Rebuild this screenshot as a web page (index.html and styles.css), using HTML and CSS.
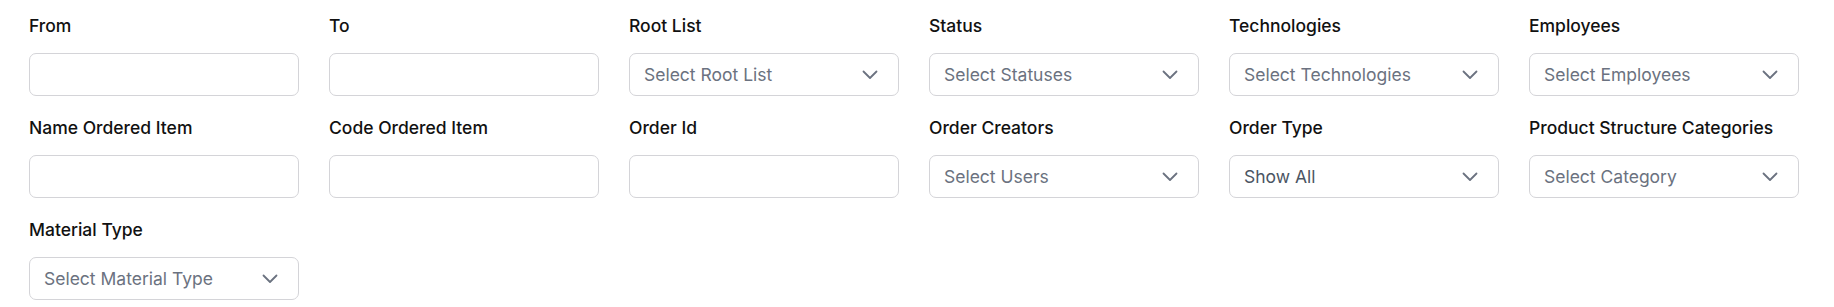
FILE: index.html
```html
<!DOCTYPE html>
<html lang="en">
  <head>
    <meta charset="UTF-8" />
    <meta name="viewport" content="width=device-width, initial-scale=1.0" />
    <title>Filters</title>
    <link rel="stylesheet" href="styles.css">
  </head>
  <body>
    <section class="filters">
      <div class="field">
        <label for="from">From</label>
        <input type="text" id="from" class="box" />
      </div>
      <div class="field">
        <label for="to">To</label>
        <input type="text" id="to" class="box" />
      </div>
      <div class="field">
        <label>Root List</label>
        <div class="box select">
          <span>Select Root List</span>
          <svg class="chev" viewBox="0 0 16 10"><polyline points="1.5,1.5 8,8 14.5,1.5" /></svg>
        </div>
      </div>
      <div class="field">
        <label>Status</label>
        <div class="box select">
          <span>Select Statuses</span>
          <svg class="chev" viewBox="0 0 16 10"><polyline points="1.5,1.5 8,8 14.5,1.5" /></svg>
        </div>
      </div>
      <div class="field">
        <label>Technologies</label>
        <div class="box select">
          <span>Select Technologies</span>
          <svg class="chev" viewBox="0 0 16 10"><polyline points="1.5,1.5 8,8 14.5,1.5" /></svg>
        </div>
      </div>
      <div class="field">
        <label>Employees</label>
        <div class="box select">
          <span>Select Employees</span>
          <svg class="chev" viewBox="0 0 16 10"><polyline points="1.5,1.5 8,8 14.5,1.5" /></svg>
        </div>
      </div>

      <div class="field">
        <label for="nameItem">Name Ordered Item</label>
        <input type="text" id="nameItem" class="box" />
      </div>
      <div class="field">
        <label for="codeItem">Code Ordered Item</label>
        <input type="text" id="codeItem" class="box" />
      </div>
      <div class="field">
        <label for="orderId">Order Id</label>
        <input type="text" id="orderId" class="box" />
      </div>
      <div class="field">
        <label>Order Creators</label>
        <div class="box select">
          <span>Select Users</span>
          <svg class="chev" viewBox="0 0 16 10"><polyline points="1.5,1.5 8,8 14.5,1.5" /></svg>
        </div>
      </div>
      <div class="field">
        <label>Order Type</label>
        <div class="box select">
          <span class="value">Show All</span>
          <svg class="chev" viewBox="0 0 16 10"><polyline points="1.5,1.5 8,8 14.5,1.5" /></svg>
        </div>
      </div>
      <div class="field">
        <label>Product Structure Categories</label>
        <div class="box select">
          <span>Select Category</span>
          <svg class="chev" viewBox="0 0 16 10"><polyline points="1.5,1.5 8,8 14.5,1.5" /></svg>
        </div>
      </div>

      <div class="field">
        <label>Material Type</label>
        <div class="box select">
          <span>Select Material Type</span>
          <svg class="chev" viewBox="0 0 16 10"><polyline points="1.5,1.5 8,8 14.5,1.5" /></svg>
        </div>
      </div>
    </section>
  </body>
</html>
```

FILE: styles.css
```css
body {
  margin: 0;
  background-color: #fff;
  font-family: Inter, "Noto Sans", sans-serif;
}
.filters {
  display: grid;
  grid-template-columns: repeat(6, 1fr);
  column-gap: 30px;
  row-gap: 20px;
  padding: 14px 35px 0 29px;
}
.field {
  display: flex;
  flex-direction: column;
  gap: 15px;
}
.field label {
  font-size: 17.5px;
  line-height: 24px;
  font-weight: 500;
  color: #111;
}
.box {
  box-sizing: border-box;
  height: 43px;
  width: 100%;
  border: 1px solid #d4d4d8;
  border-radius: 7px;
  background-color: #fff;
  font-family: inherit;
  font-size: 17.5px;
}
.box:focus {
  outline: 0;
}
.select {
  display: flex;
  align-items: center;
  justify-content: space-between;
  padding: 0 20px 0 14px;
  color: #6b7280;
}
.select .value {
  color: #4b5563;
}
.chev {
  width: 16px;
  height: 10px;
  fill: none;
  stroke: #6b7280;
  stroke-width: 1.8;
  stroke-linecap: round;
  stroke-linejoin: round;
}
```
